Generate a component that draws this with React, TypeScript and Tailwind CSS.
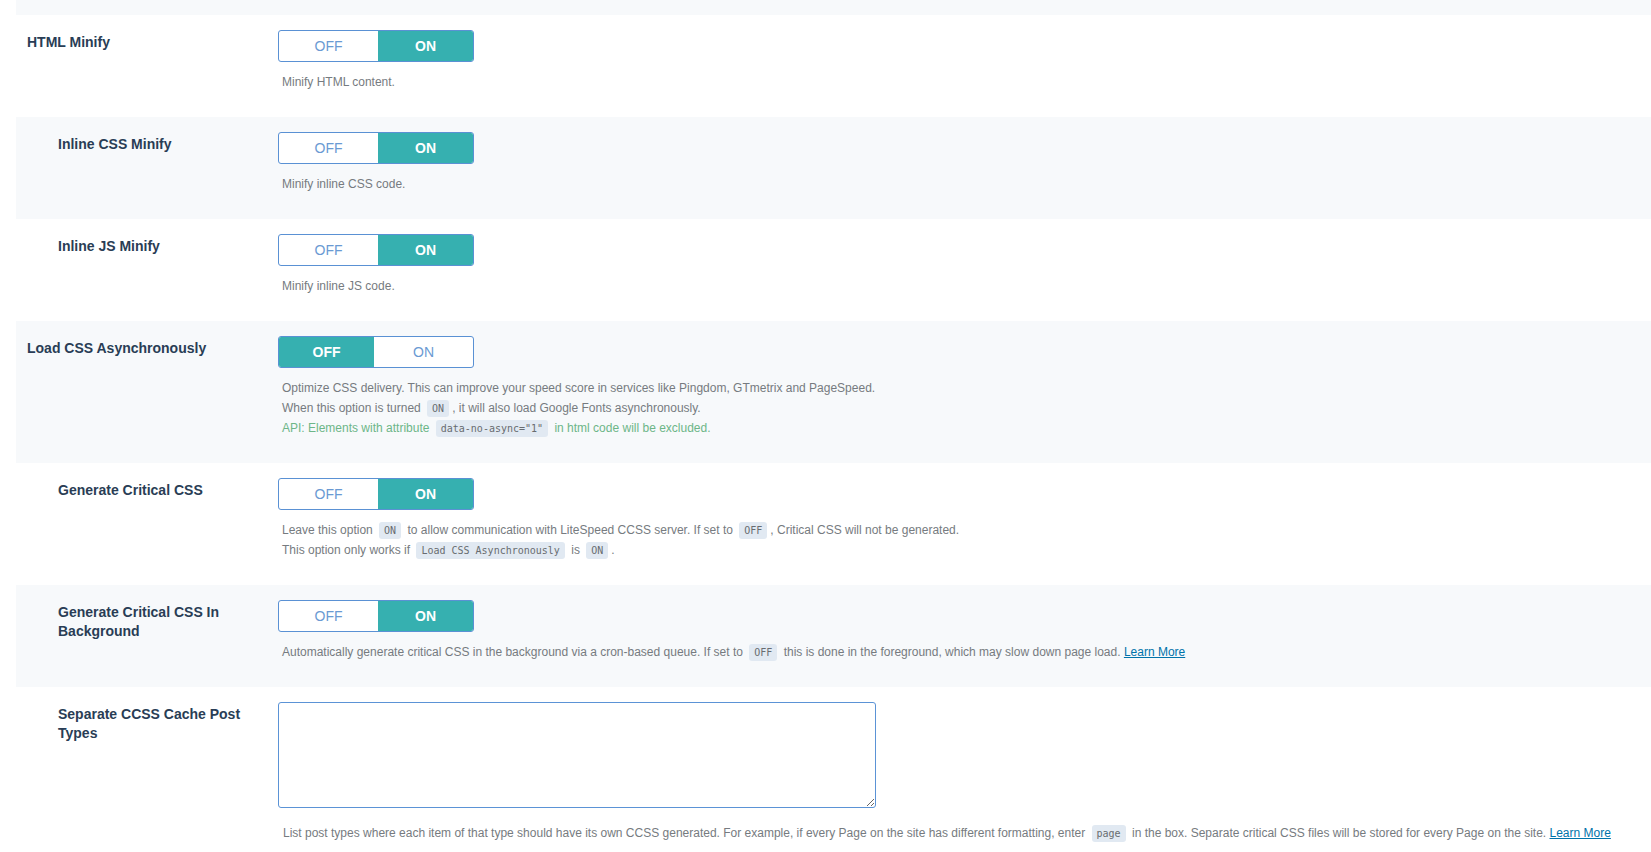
import clsx from 'clsx';
import type { ReactNode } from 'react';

function Toggle({ on }: { on: boolean }) {
  return (
    <div className="flex h-8 w-[196px] overflow-hidden rounded-[3px] border border-[#5a91d4] bg-white text-sm">
      <span
        className={clsx(
          'flex items-center justify-center',
          !on ? 'w-[95px] bg-[#36b0b0] font-bold text-white' : 'w-[99px] text-[#6a9ad3]'
        )}
      >
        OFF
      </span>
      <span
        className={clsx(
          'flex flex-1 items-center justify-center',
          on ? 'bg-[#36b0b0] font-bold text-white' : 'text-[#6a9ad3]'
        )}
      >
        ON
      </span>
    </div>
  );
}

function Code({ children }: { children: ReactNode }) {
  return (
    <code className="mx-[3px] rounded-[3px] bg-[#e1e9f2] px-[5px] py-[3px] font-['DejaVu_Sans_Mono',monospace] text-[10px] leading-none text-[#686c70]">
      {children}
    </code>
  );
}

function LearnMore() {
  return (
    <a href="#" className="text-[#0073aa] underline">
      Learn More
    </a>
  );
}

interface RowProps {
  label: string;
  indent?: boolean;
  striped?: boolean;
  children: ReactNode;
}

function Row({ label, indent, striped, children }: RowProps) {
  return (
    <div className={clsx('flex', striped ? 'bg-[#f7f9fb]' : 'bg-white')}>
      <div
        className={clsx(
          'w-[251px] shrink-0 pt-[18px] pr-[10px] text-sm leading-[19px] font-bold text-[#293d55]',
          indent ? 'pl-[42px]' : 'pl-[11px]'
        )}
      >
        {label}
      </div>
      <div className="flex-1 pt-[15px] pb-[25px] pl-[11px]">{children}</div>
    </div>
  );
}

function Desc({ children }: { children: ReactNode }) {
  return <div className="mt-[10px] pl-[4px] text-xs leading-5 text-[#767b80]">{children}</div>;
}

export default function App() {
  return (
    <div className="min-h-screen bg-white pl-[16px] font-['Liberation_Sans',Arial,sans-serif]">
      <div className="h-[15px] bg-[#f7f9fb]" />

      <Row label="HTML Minify">
        <Toggle on />
        <Desc>Minify HTML content.</Desc>
      </Row>

      <Row label="Inline CSS Minify" indent striped>
        <Toggle on />
        <Desc>Minify inline CSS code.</Desc>
      </Row>

      <Row label="Inline JS Minify" indent>
        <Toggle on />
        <Desc>Minify inline JS code.</Desc>
      </Row>

      <Row label="Load CSS Asynchronously" striped>
        <Toggle on={false} />
        <Desc>
          <div>Optimize CSS delivery. This can improve your speed score in services like Pingdom, GTmetrix and PageSpeed.</div>
          <div>
            When this option is turned <Code>ON</Code>, it will also load Google Fonts asynchronously.
          </div>
          <div className="text-[#6db688]">
            API: Elements with attribute <Code>data-no-async="1"</Code> in html code will be excluded.
          </div>
        </Desc>
      </Row>

      <Row label="Generate Critical CSS" indent>
        <Toggle on />
        <Desc>
          <div>
            Leave this option <Code>ON</Code> to allow communication with LiteSpeed CCSS server. If set to <Code>OFF</Code>,
            Critical CSS will not be generated.
          </div>
          <div>
            This option only works if <Code>Load CSS Asynchronously</Code> is <Code>ON</Code>.
          </div>
        </Desc>
      </Row>

      <Row label="Generate Critical CSS In Background" indent striped>
        <Toggle on />
        <Desc>
          Automatically generate critical CSS in the background via a cron-based queue. If set to <Code>OFF</Code> this is
          done in the foreground, which may slow down page load. <LearnMore />
        </Desc>
      </Row>

      <Row label="Separate CCSS Cache Post Types" indent>
        <textarea className="block h-[106px] w-[598px] rounded-[3px] border border-[#5b93d6] bg-white" />
        <div className="mt-[15px] pl-[5px] text-xs leading-5 text-[#767b80]">
          List post types where each item of that type should have its own CCSS generated. For example, if every Page on
          the site has different formatting, enter <Code>page</Code> in the box. Separate critical CSS files will be
          stored for every Page on the site. <LearnMore />
        </div>
      </Row>
    </div>
  );
}
